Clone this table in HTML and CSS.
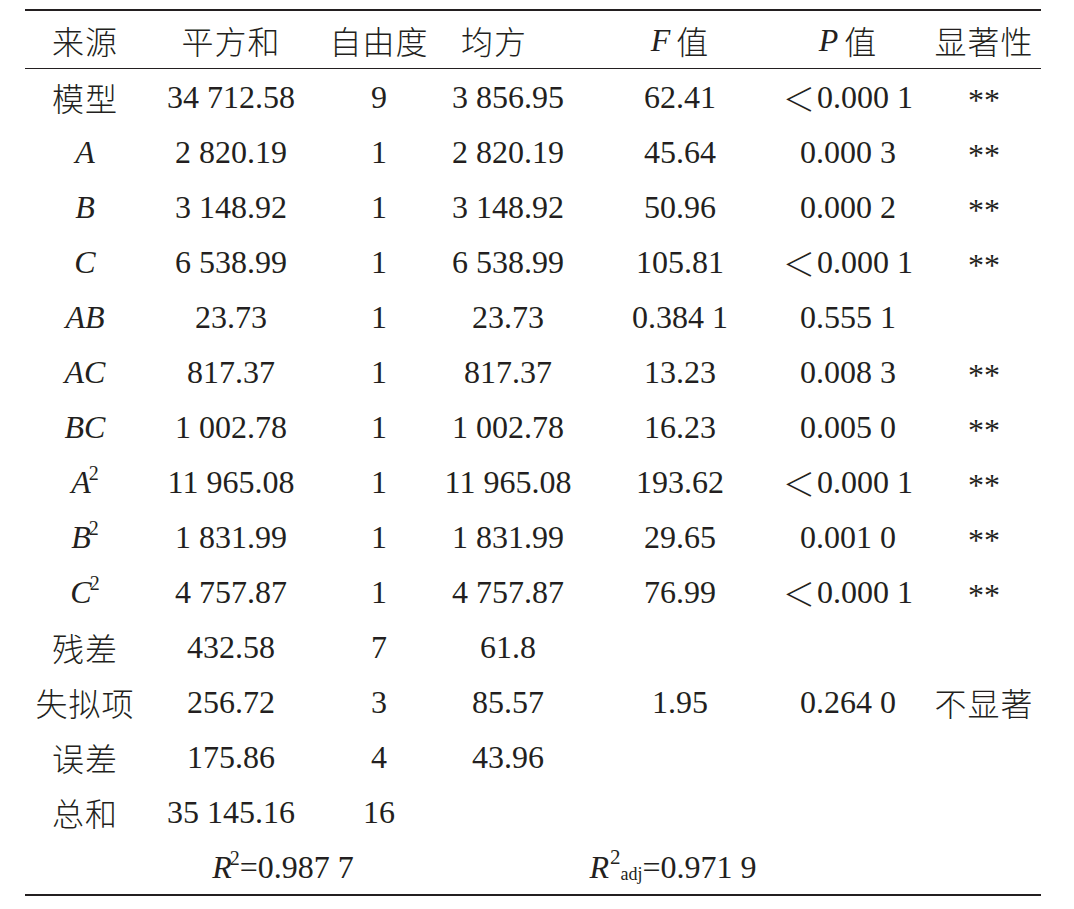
FILE: index.html
```html
<!DOCTYPE html>
<html lang="zh">
<head>
<meta charset="utf-8">
<title>方差分析</title>
<link rel="stylesheet" href="styles.css">
</head>
<body>
<div class="anova">
  <div class="row head">
    <div class="cell"><span class="zh">来源</span></div>
    <div class="cell"><span class="zh">平方和</span></div>
    <div class="cell"><span class="zh">自由度</span></div>
    <div class="cell c4h"><span class="zh">均方</span></div>
    <div class="cell"><i class="v">F</i><span class="zh">值</span></div>
    <div class="cell"><i class="v">P</i><span class="zh">值</span></div>
    <div class="cell last"><span class="zh">显著性</span></div>
  </div>

  <div class="row"><div class="cell"><span class="zh">模型</span></div><div class="cell">34 712.58</div><div class="cell">9</div><div class="cell">3 856.95</div><div class="cell">62.41</div><div class="cell"><span class="lt">＜</span>0.000 1</div><div class="cell last star">**</div></div>
  <div class="row"><div class="cell"><i>A</i></div><div class="cell">2 820.19</div><div class="cell">1</div><div class="cell">2 820.19</div><div class="cell">45.64</div><div class="cell">0.000 3</div><div class="cell last star">**</div></div>
  <div class="row"><div class="cell"><i>B</i></div><div class="cell">3 148.92</div><div class="cell">1</div><div class="cell">3 148.92</div><div class="cell">50.96</div><div class="cell">0.000 2</div><div class="cell last star">**</div></div>
  <div class="row"><div class="cell"><i>C</i></div><div class="cell">6 538.99</div><div class="cell">1</div><div class="cell">6 538.99</div><div class="cell">105.81</div><div class="cell"><span class="lt">＜</span>0.000 1</div><div class="cell last star">**</div></div>
  <div class="row"><div class="cell"><i>AB</i></div><div class="cell">23.73</div><div class="cell">1</div><div class="cell">23.73</div><div class="cell">0.384 1</div><div class="cell">0.555 1</div><div class="cell last"></div></div>
  <div class="row"><div class="cell"><i>AC</i></div><div class="cell">817.37</div><div class="cell">1</div><div class="cell">817.37</div><div class="cell">13.23</div><div class="cell">0.008 3</div><div class="cell last star">**</div></div>
  <div class="row"><div class="cell"><i>BC</i></div><div class="cell">1 002.78</div><div class="cell">1</div><div class="cell">1 002.78</div><div class="cell">16.23</div><div class="cell">0.005 0</div><div class="cell last star">**</div></div>
  <div class="row"><div class="cell"><i>A</i><sup class="sq">2</sup></div><div class="cell">11 965.08</div><div class="cell">1</div><div class="cell">11 965.08</div><div class="cell">193.62</div><div class="cell"><span class="lt">＜</span>0.000 1</div><div class="cell last star">**</div></div>
  <div class="row"><div class="cell"><i>B</i><sup class="sq">2</sup></div><div class="cell">1 831.99</div><div class="cell">1</div><div class="cell">1 831.99</div><div class="cell">29.65</div><div class="cell">0.001 0</div><div class="cell last star">**</div></div>
  <div class="row"><div class="cell"><i>C</i><sup class="sq">2</sup></div><div class="cell">4 757.87</div><div class="cell">1</div><div class="cell">4 757.87</div><div class="cell">76.99</div><div class="cell"><span class="lt">＜</span>0.000 1</div><div class="cell last star">**</div></div>
  <div class="row"><div class="cell"><span class="zh">残差</span></div><div class="cell">432.58</div><div class="cell">7</div><div class="cell">61.8</div><div class="cell"></div><div class="cell"></div><div class="cell last"></div></div>
  <div class="row"><div class="cell"><span class="zh">失拟项</span></div><div class="cell">256.72</div><div class="cell">3</div><div class="cell">85.57</div><div class="cell">1.95</div><div class="cell">0.264 0</div><div class="cell last"><span class="zh">不显著</span></div></div>
  <div class="row"><div class="cell"><span class="zh">误差</span></div><div class="cell">175.86</div><div class="cell">4</div><div class="cell">43.96</div><div class="cell"></div><div class="cell"></div><div class="cell last"></div></div>
  <div class="row"><div class="cell"><span class="zh">总和</span></div><div class="cell">35 145.16</div><div class="cell">16</div><div class="cell"></div><div class="cell"></div><div class="cell"></div><div class="cell last"></div></div>
  <div class="row foot">
    <div class="cell r2"><i>R</i><sup class="sq">2</sup>=0.987 7</div>
    <div class="cell r2adj"><i>R</i><sup class="sq2">2</sup><sub class="adj">adj</sub>=0.971 9</div>
  </div>
</div>
</body>
</html>
```

FILE: styles.css
```css
html, body {
  margin: 0;
  padding: 0;
  background: #ffffff;
}

body {
  font-family: "Liberation Serif", "Noto Sans CJK SC", serif;
  font-size: 32px;
  color: #231f20;
}

.anova {
  width: 1016px;
  margin: 9px 0 0 25px;
}

.row {
  display: grid;
  grid-template-columns: 120px 172px 124px 134px 210px 126px 130px;
  height: 55px;
}

.row.head {
  height: 57px;
  border-top: 2px solid #231f20;
  border-bottom: 1px solid #231f20;
}

.row.foot {
  border-bottom: 2px solid #231f20;
}

.cell {
  display: flex;
  justify-content: center;
  align-items: center;
  white-space: nowrap;
  line-height: 1;
  padding-top: 1px;
}

.cell.last {
  padding-left: 16px;
}

.head .cell {
  padding-top: 0;
}

.c4h {
  padding-right: 28px;
}

.zh {
  font-family: "Noto Sans CJK SC", sans-serif;
  font-weight: 300;
  letter-spacing: 1px;
}

.v {
  margin-right: 6px;
}

.lt {
  font-family: "Noto Sans CJK SC", sans-serif;
  font-weight: 300;
  margin-right: 2px;
}

.star {
  align-items: flex-start;
  padding-top: 15px;
}

.sq {
  font-size: 20px;
  line-height: 0;
  position: relative;
  top: -9px;
  vertical-align: baseline;
  margin-left: -2px;
}

.sq2 {
  font-size: 21px;
  line-height: 0;
  position: relative;
  top: -10px;
  vertical-align: baseline;
  margin-left: 1px;
}

.adj {
  font-size: 18px;
  line-height: 0;
  position: relative;
  top: 7px;
  vertical-align: baseline;
}

.r2 {
  grid-column: 2 / 4;
  padding-right: 20px;
}

.r2adj {
  grid-column: 5 / 6;
  padding-right: 14px;
}
```
